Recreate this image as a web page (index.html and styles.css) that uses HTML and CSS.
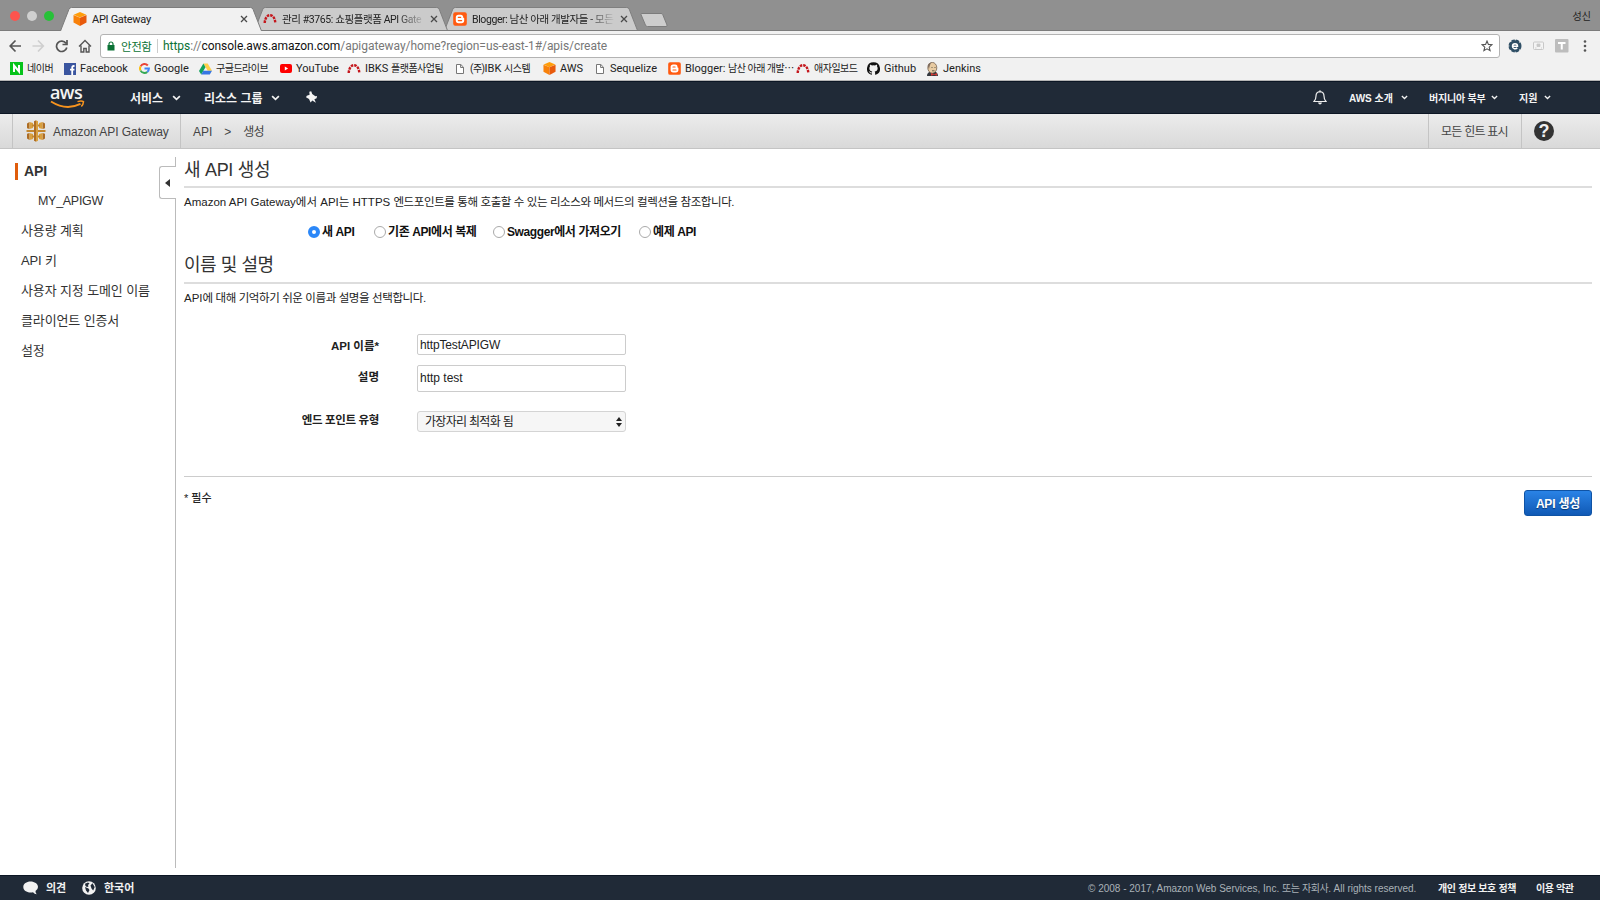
FILE: index.html
```html
<!DOCTYPE html>
<html lang="ko">
<head>
  <meta charset="UTF-8" />
  <meta name="viewport" content="width=device-width, initial-scale=1" />
  <title>API Gateway</title>
  <link rel="stylesheet" href="styles.css">
</head>
<body>

  <svg width="0" height="0" class="defs">
    <symbol id="tab-shape" viewBox="0 0 202 24">
      <path d="M0.5 24 L9 2.2 Q9.8 .5 11.5 .5 H190.5 Q192.2 .5 193 2.2 L201.5 24" stroke="#7c7c7c"/>
    </symbol>
    <symbol id="cube" viewBox="0 0 14 14">
      <path d="M7 0 13.3 2.8 7 5.6 .7 2.8Z" fill="#ff9d0a"/>
      <path d="M.5 3 7 5.7V14L.5 10.6Z" fill="#f8810a"/>
      <path d="M13.5 3 7 5.7V14l6.5-3.4Z" fill="#e85a0c"/>
    </symbol>
    <symbol id="redmine" viewBox="0 0 14 11">
      <path d="M1.700 10C2 5 4.200 2.200 7 2.200s5 2.800 5.300 7.800" fill="none" stroke="#c4161c" stroke-width="2.400" stroke-dasharray="2.600 .9"/>
    </symbol>
    <symbol id="blogger" viewBox="0 0 14 14">
      <rect x=".2" y=".2" width="13.6" height="13.6" rx="2" fill="#ff5a10"/>
      <path d="M5.5 2.8h2.200c1.600 0 2.500 1 2.500 2.300 0 .8.300 1.100 1 1.200v2.200c0 1.700-1 2.700-2.700 2.700h-3c-1.700 0-2.700-1-2.700-2.700V5.500c0-1.700 1-2.700 2.700-2.700z" fill="#fff"/>
      <path d="M5.400 5.400h2.200M5.400 8.600h3.200" stroke="#ff5a10" stroke-width="1.300" stroke-linecap="round"/>
    </symbol>
    <symbol id="close" viewBox="0 0 8 8">
      <path d="M1 1l6 6M7 1L1 7" stroke="#4a4a4a" stroke-width="1.300"/>
    </symbol>
    <symbol id="file" viewBox="0 0 8 10">
      <path d="M.5.5h4.300L7.500 3.200v6.300h-7zM4.600.5v3h2.900" fill="#fff" stroke="#777"/>
    </symbol>
    <symbol id="chevron" viewBox="0 0 8 5">
      <path d="M1 .8l3 2.900L7 .8" fill="none" stroke="#f2f2f2" stroke-width="1.500"/>
    </symbol>
  </svg>

  <!-- browser chrome -->
  <div class="tabstrip">
    <div class="lights"><i class="red"></i><i class="gray"></i><i class="green"></i></div>
    <div class="tab active">
      <svg class="tab-bg"><use href="#tab-shape"/></svg>
      <svg class="favicon" width="14" height="14"><use href="#cube"/></svg>
      <span class="tab-title">API Gateway</span>
      <svg class="tab-close" width="8" height="8"><use href="#close"/></svg>
    </div>
    <div class="tab second">
      <svg class="tab-bg"><use href="#tab-shape"/></svg>
      <svg class="favicon" width="14" height="11"><use href="#redmine"/></svg>
      <span class="tab-title fade">관리 #3765: 쇼핑플랫폼 API Gate</span>
      <svg class="tab-close" width="8" height="8"><use href="#close"/></svg>
    </div>
    <div class="tab third">
      <svg class="tab-bg"><use href="#tab-shape"/></svg>
      <svg class="favicon" width="14" height="14"><use href="#blogger"/></svg>
      <span class="tab-title fade">Blogger: 남산 아래 개발자들 - 모든</span>
      <svg class="tab-close" width="8" height="8"><use href="#close"/></svg>
    </div>
    <svg class="new-tab" width="28" height="14" viewBox="0 0 28 14">
      <path d="M1 1.500Q.7.500 2 .5h19q1.200 0 1.700 1L27 12q.5 1.500-1 1.500H7.500q-1.500 0-2-1.300z" fill="#cdcdcd" stroke="#7c7c7c"/>
    </svg>
    <span class="profile">성신</span>
  </div>

  <div class="toolbar">
    <svg class="nav-icons" width="91" height="14" viewBox="0 0 91 14" fill="none" stroke-width="1.700">
      <path d="M12 7H1.500M6.500 1.500 1.200 7l5.300 5.500" stroke="#555"/>
      <path d="M23.500 7H34M29 1.500 34.300 7 29 12.500" stroke="#cfcfcf"/>
      <path d="M57 4.300A5.200 5.200 0 1 0 57.800 8.500M58 1v4.500h-4.500" stroke="#555"/>
      <path d="M70 7.500 76 1.500 82 7.500M72 6.500V13h2.800V9.500h2.400V13h2.800V6.500" stroke="#555" stroke-width="1.400"/>
    </svg>
    <div class="url-box">
      <svg width="8" height="10" viewBox="0 0 8 10"><path d="M2 4.500V3a2 2 0 0 1 4 0v1.500" fill="none" stroke="#0b7235" stroke-width="1.200"/><rect x=".5" y="4" width="7" height="5.500" fill="#0b7235"/></svg>
      <span class="secure">안전함</span>
      <span class="url"><b>https</b>://<em>console.aws.amazon.com</em>/apigateway/home?region=us-east-1#/apis/create</span>
      <svg class="star" width="12" height="12" viewBox="0 0 12 12"><path d="M6 1l1.400 3.400 3.600.3-2.800 2.400.9 3.600L6 8.800l-3.100 1.900.9-3.600L1 4.700l3.600-.3z" fill="none" stroke="#555" stroke-width="1.100"/></svg>
    </div>
    <svg class="ext-icons" width="84" height="14" viewBox="0 0 84 14">
      <circle cx="7" cy="7" r="5.700" fill="#2f4f66" stroke="#2f4f66" stroke-width="1.600" stroke-dasharray="3.500 1"/>
      <path d="M4.500 7.200h5c0-3.400-5-3.400-5 0 0 3 3.500 3.200 4.700 1.600" fill="none" stroke="#fff" stroke-width="1.500"/>
      <rect x="25.500" y="3" width="10" height="7.500" rx="1" fill="#f4f4f4" stroke="#c8c8c8"/>
      <path d="M29 5h3v2.500h-3zM27 9h1.500m4.500 0h1" fill="#c8c8c8" stroke="#c8c8c8" stroke-width=".8"/>
      <rect x="47" y="0" width="13.500" height="13.500" rx="1" fill="#bdbdbd"/>
      <path d="M50 4h7.500M53.750 4v6.500" stroke="#fff" stroke-width="2"/>
      <g fill="#555"><circle cx="77" cy="2.500" r="1.300"/><circle cx="77" cy="7" r="1.300"/><circle cx="77" cy="11.500" r="1.300"/></g>
    </svg>
  </div>

  <div class="bookmarks">
    <a><svg width="13" height="13"><rect width="13" height="13" fill="#06c31b"/><path d="M4 10V3.500L9 9.500V3" fill="none" stroke="#fff" stroke-width="2"/></svg><span class="ko">네이버</span></a>
    <a><svg width="12" height="12"><rect width="12" height="12" fill="#3a559f"/><path d="M10.500 3H9.700Q8.200 3 8.200 4.500V12M6 6.700h4.400" fill="none" stroke="#fff" stroke-width="1.800"/></svg>Facebook</a>
    <a><svg width="11" height="11" viewBox="0 0 11 11" fill="none" stroke-width="2"><path d="M1.600 3.400A4.400 4.400 0 0 1 8.800 2.500" stroke="#ea4335"/><path d="M1.600 3.400a4.400 4.400 0 0 0 0 4.200" stroke="#fbbc05"/><path d="M1.600 7.600a4.400 4.400 0 0 0 6.700 1.300" stroke="#34a853"/><path d="M5.500 5.500h4.400a4.400 4.400 0 0 1-1.600 3.400" stroke="#4285f4"/></svg>Google</a>
    <a><svg width="13" height="12" viewBox="0 0 13 12"><path d="M4.400.5h4.300L13 7.800H8.700z" fill="#ffcf48"/><path d="M4.400.5 0 7.900l2.200 3.600 4.300-7.300z" fill="#11a35d"/><path d="M4.300 7.800H13l-2.200 3.700H2.200z" fill="#3777e3"/></svg><span class="ko">구글드라이브</span></a>
    <a><svg width="12" height="9"><rect width="12" height="9" rx="2" fill="#f00"/><path d="M4.800 2.500v4l3.300-2z" fill="#fff"/></svg>YouTube</a>
    <a><svg width="14" height="11"><use href="#redmine"/></svg><span>IBKS <span class="ko">플랫폼사업팀</span></span></a>
    <a class="page"><svg width="8" height="10"><use href="#file"/></svg><span><span class="ko">(주)</span>IBK <span class="ko">시스템</span></span></a>
    <a><svg width="13" height="13"><use href="#cube"/></svg>AWS</a>
    <a class="page"><svg width="8" height="10"><use href="#file"/></svg>Sequelize</a>
    <a><svg width="13" height="13"><use href="#blogger"/></svg><span>Blogger: <span class="ko">남산 아래 개발⋯</span></span></a>
    <a><svg width="14" height="11"><use href="#redmine"/></svg><span class="ko">애자일보드</span></a>
    <a><svg width="13" height="13" viewBox="0 0 16 16"><path d="M8 .2a8 8 0 0 0-2.500 15.600c.4.100.500-.2.500-.4v-1.500c-2.200.5-2.700-.9-2.700-.9-.4-.9-.9-1.200-.9-1.200-.7-.5.100-.5.100-.5.800.1 1.200.8 1.200.8.700 1.200 1.900.9 2.300.7.100-.5.300-.9.500-1.100-1.800-.2-3.600-.9-3.600-4 0-.9.300-1.600.8-2.100-.1-.2-.4-1 .1-2.100 0 0 .7-.2 2.200.8a7.500 7.500 0 0 1 4 0c1.500-1 2.200-.8 2.200-.8.500 1.100.2 1.900.1 2.100.5.500.8 1.200.8 2.100 0 3.100-1.900 3.800-3.700 4 .3.300.6.800.6 1.500v2.200c0 .2.100.5.500.4A8 8 0 0 0 8 .2z" fill="#111"/></svg>Github</a>
    <a><svg width="13" height="14" viewBox="0 0 13 14"><path d="M1 14q0-4 4-4.500h4q3 1 3 4.500z" fill="#34383e"/><ellipse cx="6.300" cy="5.800" rx="4.500" ry="5.400" fill="#e8cba2" stroke="#755f4d" stroke-width=".8"/><path d="M1.800 4Q2 1 5 .7q-1.500 3-2 6.300z" fill="#806d5e"/><path d="M5.500 5.500h1m2 0h1M6 8.800h2.500" stroke="#443" stroke-width=".8"/><path d="M5 11l3 1.200 3-1.200v2.800l-3-1-3 1z" fill="#d33833"/></svg>Jenkins</a>
  </div>

  <!-- console navigation -->
  <div class="aws-nav">
    <div class="logo">
      <span>aws</span>
      <svg width="36" height="9" viewBox="0 0 36 9" fill="none" stroke="#f7941e"><path d="M1 1.500q15 9.500 29.500 2.400" stroke-width="1.900"/><path d="M27.500 1.600q4-1.300 6 0-.2 2.900-2.200 5" stroke-width="1.500"/></svg>
    </div>
    <span class="service">서비스</span>
    <svg width="9" height="6"><use href="#chevron"/></svg>
    <span class="group">리소스 그룹</span>
    <svg width="9" height="6"><use href="#chevron"/></svg>
    <svg class="pin" width="13" height="13" viewBox="0 0 13 13"><path d="M4.300.8 6.200.3l1 2.700 3.200 2.200 1.600-.2-.4 2.300-2.200 1 1.500 3.500-3.600-2.300-1.700 2-1.600-3.600L1 6.200l.8-1.500 2.800-.9z" fill="#f4f4f4"/></svg>
    <svg class="bell" width="14" height="15" viewBox="0 0 14 15"><path d="M1 11.500q2-2 2-5.500 0-4 4-4.300Q11 2 11 6q0 3.500 2 5.500zM7 .3v1.500" fill="none" stroke="#eee" stroke-width="1.200"/><path d="M5 12.500h4q-.5 1.900-2 1.900t-2-1.900z" fill="#eee"/></svg>
    <span class="small about">AWS 소개</span>
    <svg width="7" height="5"><use href="#chevron"/></svg>
    <span class="small region">버지니아 북부</span>
    <svg width="7" height="5"><use href="#chevron"/></svg>
    <span class="small support">지원</span>
    <svg width="7" height="5"><use href="#chevron"/></svg>
  </div>

  <div class="crumbs">
    <div class="product">
      <svg width="20" height="22" viewBox="0 0 20 22">
        <path d="M1 3.500 3.500 2v7L1 8.300zM1 13.700l2.500-.7v7L1 18.500zM19 3.500 16.500 2v7l2.500-.7zM19 13.700l-2.500-.7v7l2.500-1.500z" fill="#ad6d25"/>
        <path d="M3.500 2 7 3v5l-3.500 1zM3.500 13 7 14v5l-3.500 1zM16.500 2 13 3v5l3.500 1zM16.500 13l-3.500 1v5l3.500 1z" fill="#d9a03e"/>
        <path d="M6 5.500h8M6 16.500h8M.5 11h19" stroke="#c4872e" stroke-width="2"/>
        <path d="M8 1.300 10 .3v21.400l-2-1z" fill="#ad6d25"/><path d="M10 .3l2 1v19.400l-2 1z" fill="#d9a03e"/>
      </svg>
      <span>Amazon API Gateway</span>
    </div>
    <div class="path"><span>API</span><span>&gt;</span><span class="current">생성</span></div>
    <div class="hints">모든 힌트 표시</div>
    <div class="help">?</div>
  </div>

  <div class="main">
    <div class="sidebar">
      <div class="side-item selected">API</div>
      <div class="side-item child">MY_APIGW</div>
      <div class="side-item">사용량 계획</div>
      <div class="side-item">API 키</div>
      <div class="side-item">사용자 지정 도메인 이름</div>
      <div class="side-item">클라이언트 인증서</div>
      <div class="side-item">설정</div>
      <div class="collapse"><svg width="5" height="8"><path d="M5 0v8L0 4z" fill="#333"/></svg></div>
    </div>

    <form class="content">
      <h1>새 API 생성</h1>
      <p>Amazon API Gateway에서 API는 HTTPS <span class="tight">엔드포인트를 통해 호출할 수 있는 리소스와 메서드의 컬렉션을 참조합니다.</span></p>
      <div class="radios">
        <label><input type="radio" name="kind" checked><span>새 API</span></label>
        <label><input type="radio" name="kind"><span>기존 API에서 복제</span></label>
        <label><input type="radio" name="kind"><span>Swagger에서 가져오기</span></label>
        <label><input type="radio" name="kind"><span>예제 API</span></label>
      </div>

      <h1 class="details">이름 및 설명</h1>
      <p>API<span class="tight">에 대해 기억하기 쉬운 이름과 설명을 선택합니다.</span></p>
      <div class="fields">
        <label for="name">API 이름*</label>
        <input type="text" id="name" value="httpTestAPIGW">
        <label for="desc">설명</label>
        <input type="text" id="desc" class="desc" value="http test">
        <label class="endpoint">엔드 포인트 유형</label>
        <div class="select">
          <span>가장자리 최적화 됨</span>
          <svg width="6" height="10"><path d="M3 0l3 4H0zM3 10l3-4H0z" fill="#222"/></svg>
        </div>
      </div>

      <div class="actions">
        <span class="required">* 필수</span>
        <button type="button">API 생성</button>
      </div>
    </form>
  </div>

  <div class="footer">
    <svg width="16" height="14" viewBox="0 0 16 14"><path d="M7.500.5C3.500.5.300 2.800.300 6s3.200 5.500 7.200 5.500q1.300 0 2.500-.3 1.500 2 3.700 2-1.300-1.300-1.200-3.200Q15 8.500 15 6C15 2.800 11.500.5 7.500.5z" fill="#f2f2f2"/></svg>
    <span class="feedback">의견</span>
    <svg width="14" height="14" viewBox="0 0 14 14"><circle cx="7" cy="7" r="6.800" fill="#f2f2f2"/><path d="M3 2.700 6 1.500l1.500 1L6 4l.5 1.500L5 6 3.500 5zM8.500 4.500l2-2.200L12.700 6l-1.500 3.500L9.500 7.500zM3 6l3.500 1.500 1 1.500-1.500 3-2-2.500z" fill="#202a37"/></svg>
    <span class="language">한국어</span>
    <span class="copyright">© 2008 - 2017, Amazon Web Services, Inc. <span class="tight">또는 자회사.</span> All rights reserved.</span>
    <span class="policy">개인 정보 보호 정책</span>
    <span class="terms">이용 약관</span>
  </div>

</body>
</html>
```

FILE: styles.css
```css
* {
  box-sizing: border-box;
}
body {
  margin: 0;
  height: 900px;
  display: flex;
  flex-direction: column;
  overflow: hidden;
  background: #fff;
  color: #333;
  font-family: "Liberation Sans", "Noto Sans CJK KR", sans-serif;
  font-size: 12px;
  white-space: nowrap;
}
svg {
  flex: none;
  display: block;
}
.defs {
  position: absolute;
}
.tight {
  letter-spacing: -.4px;
}

/* browser chrome */
.tabstrip, .toolbar, .bookmarks {
  flex: none;
  display: flex;
  font-family: Roboto, "Noto Sans CJK KR", sans-serif;
  font-size: 11px;
  color: #222;
}
.tabstrip {
  height: 31px;
  padding-top: 7px;
  background: #909090;
  border-bottom: 1px solid #7c7c7c;
}
.lights {
  display: flex;
  gap: 7px;
  width: 60px;
  padding: 4px 0 0 10px;
}
.lights i {
  width: 10px;
  height: 10px;
  border-radius: 50%;
}
.red {
  background: #fc544e;
}
.gray {
  background: #cfcfcf;
}
.green {
  background: #27c138;
}
.tab {
  position: relative;
  display: flex;
  align-items: center;
  width: 202px;
  height: 24px;
  padding: 0 14px 0 13px;
  margin-right: -12px;
}
.tab-bg {
  position: absolute;
  left: 0;
  top: 0;
  width: 202px;
  height: 24px;
  fill: #cbcbcb;
}
.active {
  z-index: 3;
}
.active .tab-bg {
  fill: #f1f1f1;
}
.second {
  z-index: 2;
  height: 23px;
}
.third {
  z-index: 1;
  height: 23px;
}
.second .tab-bg, .third .tab-bg {
  height: 23px;
}
.favicon, .tab-title, .tab-close {
  position: relative;
}
.tab-title {
  flex: 1;
  margin: 0 4px 0 5px;
  letter-spacing: -.3px;
}
.fade {
  font-size: 10.5px;
  mask-image: linear-gradient(to right, #000 80%, transparent);
}
.second .fade {
  letter-spacing: -.4px;
}
.third .fade {
  letter-spacing: -.4px;
}
.new-tab {
  margin: 6px 0 0 10px;
}
.profile {
  margin: 1px 9px 0 auto;
  font-size: 10px;
}
.toolbar {
  align-items: center;
  height: 30px;
  padding: 0 0 0 9px;
  background: #f1f1f1;
}
.url-box {
  display: flex;
  align-items: center;
  width: 1400px;
  height: 24px;
  padding: 0 6px;
  border: 1px solid #b3b3b3;
  border-radius: 3px;
  background: #fff;
  font-size: 12px;
}
.secure {
  width: 36px;
  margin: -1px 0 0 6px;
  font-size: 11.5px;
  letter-spacing: -.4px;
  color: #0b7235;
}
.url {
  padding-left: 5px;
  border-left: 1px solid #ccc;
  color: #777;
  letter-spacing: -.05px;
}
.url b {
  font-weight: normal;
  color: #0b7235;
}
.url em {
  font-style: normal;
  color: #111;
}
.star {
  margin-left: auto;
}
.ext-icons {
  margin-left: 8px;
}
.bookmarks {
  display: grid;
  grid-template-columns: 54px 75px 60px 81px 67px 109px 87px 53px 72px 128px 71px 59px 70px;
  align-items: center;
  height: 20px;
  padding: 0 0 4px 10px;
  background: #f1f1f1;
  border-bottom: 1px solid #b5b5b5;
}
.bookmarks a {
  display: flex;
  align-items: center;
  gap: 4px;
  height: 14px;
  line-height: 14px;
}
.bookmarks .page {
  gap: 6px;
}
.ko {
  font-size: 10px;
  letter-spacing: -.5px;
}

/* console navigation */
.aws-nav {
  flex: none;
  display: flex;
  align-items: center;
  height: 33px;
  border: solid #0c1624;
  border-width: 1px 0;
  background: #202a37;
  color: #f4f4f4;
  font-size: 12px;
  font-weight: bold;
}
.logo {
  width: 80px;
  margin-left: 50px;
}
.logo span {
  display: block;
  height: 14px;
  line-height: 12px;
  font-family: "Open Sans", sans-serif;
  font-size: 18px;
  font-weight: 600;
  letter-spacing: -.6px;
}
.service {
  width: 42px;
}
.group {
  width: 67px;
  margin-left: 23px;
}
.pin {
  margin-left: 25px;
}
.bell {
  margin-left: auto;
}
.small {
  font-size: 10px;
}
.about {
  width: 52px;
  margin-left: 22px;
}
.region {
  width: 62px;
  margin-left: 21px;
  letter-spacing: -.2px;
}
.support {
  width: 25px;
  margin-left: 21px;
}
.support + svg {
  margin-right: 49px;
}
.crumbs {
  flex: none;
  display: flex;
  align-items: center;
  height: 35px;
  padding-left: 12px;
  border-bottom: 1px solid #c4c4c4;
  background: linear-gradient(#ececec, #d9d9d9);
  color: #444;
}
.crumbs > div {
  display: flex;
  align-items: center;
  height: 34px;
}
.product {
  width: 169px;
  gap: 7px;
  padding-left: 13px;
  border: solid #c4c4c4;
  border-width: 0 1px;
}
.product span {
  padding-top: 1px;
  letter-spacing: -.05px;
}
.path {
  gap: 12px;
  padding: 1px 0 0 12px;
}
.current {
  margin-top: -2px;
  letter-spacing: -.8px;
}
.hints {
  width: 94px;
  margin-left: auto;
  padding: 0 0 2px 12px;
  border: solid #c4c4c4;
  border-width: 0 1px;
  letter-spacing: -.75px;
}
.crumbs .help {
  justify-content: center;
  width: 20px;
  height: 20px;
  margin: 0 46px 0 12px;
  border-radius: 50%;
  background: #333;
  color: #f0f0f0;
  font-size: 18px;
  font-weight: bold;
}

/* page */
.main {
  flex: 1;
  display: flex;
}
.sidebar {
  position: relative;
  width: 176px;
  margin: 8px 0 7px;
  border-right: 1px solid #bbb;
}
.side-item {
  height: 30px;
  padding-left: 21px;
  line-height: 30px;
  font-size: 13px;
  letter-spacing: -.12px;
}
.side-item:first-child {
  margin-top: -1px;
}
.selected {
  display: flex;
  align-items: center;
  padding-left: 15px;
  font-size: 14px;
  font-weight: bold;
}
.selected::before {
  content: "";
  width: 3px;
  height: 17px;
  margin-right: 6px;
  background: #e05d0c;
}
.child {
  padding-left: 38px;
  font-size: 12.5px;
  letter-spacing: -.3px;
}
.collapse {
  position: absolute;
  right: -1px;
  top: 9px;
  display: flex;
  align-items: center;
  width: 17px;
  height: 33px;
  padding-left: 5px;
  border: 1px solid #bbb;
  border-right: 0;
  border-radius: 3px 0 0 3px;
  background: #fff;
}
.content {
  flex: 1;
  padding: 0 8px;
}
h1 {
  height: 39px;
  margin: 0;
  border-bottom: 2px solid #ddd;
  line-height: 42px;
  font-size: 18px;
  font-weight: normal;
  letter-spacing: -.3px;
}
p {
  height: 30px;
  margin: 0;
  line-height: 29px;
  font-size: 11.5px;
  color: #222;
}
.radios {
  display: grid;
  grid-template-columns: 66px 119px 146px 80px;
  height: 26px;
  padding-left: 124px;
  align-items: center;
  font-weight: bold;
  letter-spacing: -.4px;
  color: #111;
}
.radios label {
  display: flex;
  align-items: center;
  gap: 2px;
}
.radios span {
  margin-top: -2px;
}
.radios input {
  appearance: none;
  width: 12px;
  height: 12px;
  margin: 1px 0 0;
  border: 1px solid #aaa;
  border-radius: 50%;
  background: #fff;
}
.radios input:checked {
  border: 4px solid #2b87f8;
}
.details {
  height: 40px;
  letter-spacing: -.45px;
}
.fields {
  display: grid;
  grid-template-columns: 195px 209px;
  grid-template-rows: 31px 46px 22px;
  column-gap: 38px;
  margin-top: 20px;
  color: #222;
}
.fields label {
  margin-top: 3px;
  text-align: right;
  font-size: 11.5px;
  font-weight: bold;
}
.fields .endpoint {
  margin-top: 0;
  letter-spacing: -.35px;
}
.fields input {
  width: 209px;
  height: 21px;
  padding: 0 2px;
  border: 1px solid #ccc;
  border-radius: 2px;
  font: 12px "Liberation Sans", sans-serif;
  letter-spacing: -.15px;
  color: #222;
}
.fields .desc {
  height: 27px;
  padding-bottom: 2px;
  letter-spacing: 0;
}
.select {
  display: flex;
  align-items: center;
  justify-content: space-between;
  height: 21px;
  padding: 0 3px 0 7px;
  border: 1px solid #d4d4d4;
  border-radius: 3px;
  background: #f6f6f6;
}
.select span {
  margin-top: -2px;
  letter-spacing: -.7px;
}
.actions {
  display: flex;
  justify-content: space-between;
  margin-top: 43px;
  padding-top: 13px;
  border-top: 1px solid #ccc;
}
.required {
  margin-top: -1px;
  font-size: 11px;
  font-weight: 500;
  color: #222;
}
button {
  width: 68px;
  height: 26px;
  padding: 0 0 2px;
  border: 1px solid #0f53a5;
  border-radius: 3px;
  background: linear-gradient(#2a83e6, #1059b5);
  color: #fff;
  font: bold 12px "Liberation Sans", "Noto Sans CJK KR", sans-serif;
  letter-spacing: -.2px;
  text-shadow: 0 1px 1px #08386f;
}
.footer {
  flex: none;
  display: flex;
  align-items: center;
  height: 25px;
  padding-left: 23px;
  border-top: 1px solid #0c1624;
  background: #202a37;
  color: #f2f2f2;
  font-weight: bold;
  font-size: 11px;
}
.footer > span {
  margin-top: -2px;
}
.feedback {
  width: 36px;
  margin-left: 7px;
}
.language {
  margin-left: 8px;
}
.copyright {
  width: 350px;
  margin-left: auto;
  font-size: 10px;
  font-weight: normal;
  color: #aab2b8;
}
.policy {
  width: 98px;
  font-size: 10px;
  letter-spacing: -.35px;
}
.terms {
  width: 64px;
  font-size: 10px;
  letter-spacing: -.4px;
}
```
